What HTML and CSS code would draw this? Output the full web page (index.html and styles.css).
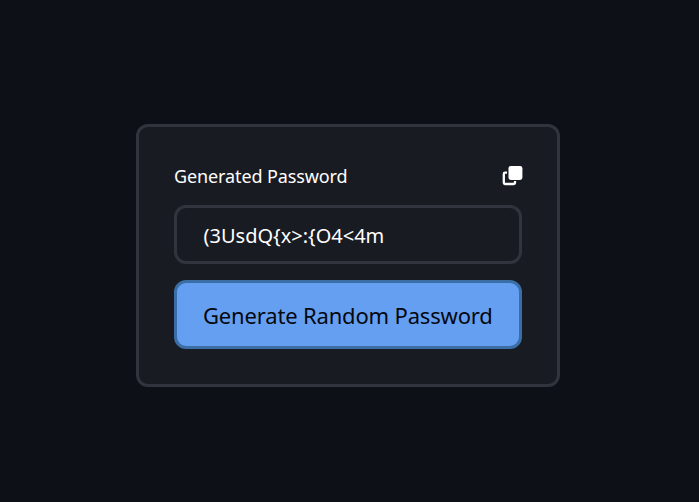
FILE: index.html
```html
<!DOCTYPE html>
<html lang="en">
<head>
<meta charset="utf-8">
<title>Password Generator</title>
<link rel="stylesheet" href="styles.css">
</head>
<body>
<main class="card">
  <div class="header">
    <span class="label">Generated Password</span>
    <svg class="copy" viewBox="0 0 22 22" width="22" height="22" role="img" aria-label="Copy">
      <path d="M6 7.7H4.1a1.3 1.3 0 0 0-1.3 1.3v8.7a1.3 1.3 0 0 0 1.3 1.3h8.6a1.3 1.3 0 0 0 1.3-1.3v-1.7" fill="none" stroke="#fff" stroke-width="2.3"/>
      <rect x="7.5" y="1" width="13.9" height="13.9" rx="2.3" fill="#fff"/>
    </svg>
  </div>
  <div class="field"><span class="password">(3UsdQ{x&gt;:{O4&lt;4m</span></div>
  <button class="generate" type="button"><span class="caption">Generate Random Password</span></button>
</main>
</body>
</html>
```
FILE: styles.css
```css
* {
  box-sizing: border-box;
}

body {
  margin: 0;
  height: 502px;
  padding-top: 124px;
  padding-left: 136px;
  background: #0d1017;
  color: #fff;
  font-family: "Segoe UI", "Noto Sans", "Open Sans", sans-serif;
}

.card {
  width: 424px;
  height: 263px;
  padding: 35px;
  border: 3px solid #31343c;
  border-radius: 12px;
  background: #191b23;
}

.header {
  display: flex;
  justify-content: space-between;
  height: 28px;
  margin-bottom: 15px;
}

.label {
  font-size: 18px;
  line-height: 28px;
  letter-spacing: -0.11px;
}

.copy {
  flex: none;
  margin: 3px -1px 0 0;
}

.field {
  height: 59px;
  margin-bottom: 16px;
  padding-left: 26.5px;
  border: 3px solid #31343c;
  border-radius: 12px;
  font-size: 20px;
  line-height: 55px;
}

.generate {
  display: block;
  width: 348px;
  height: 69px;
  padding: 2px 0 0 26px;
  border: 3px solid #3b6ea5;
  border-radius: 12px;
  background: #659ff2;
  color: #06080d;
  font-family: inherit;
  font-size: 22px;
  font-weight: 400;
  letter-spacing: -0.17px;
  line-height: 61px;
  text-align: left;
  white-space: nowrap;
}
```
